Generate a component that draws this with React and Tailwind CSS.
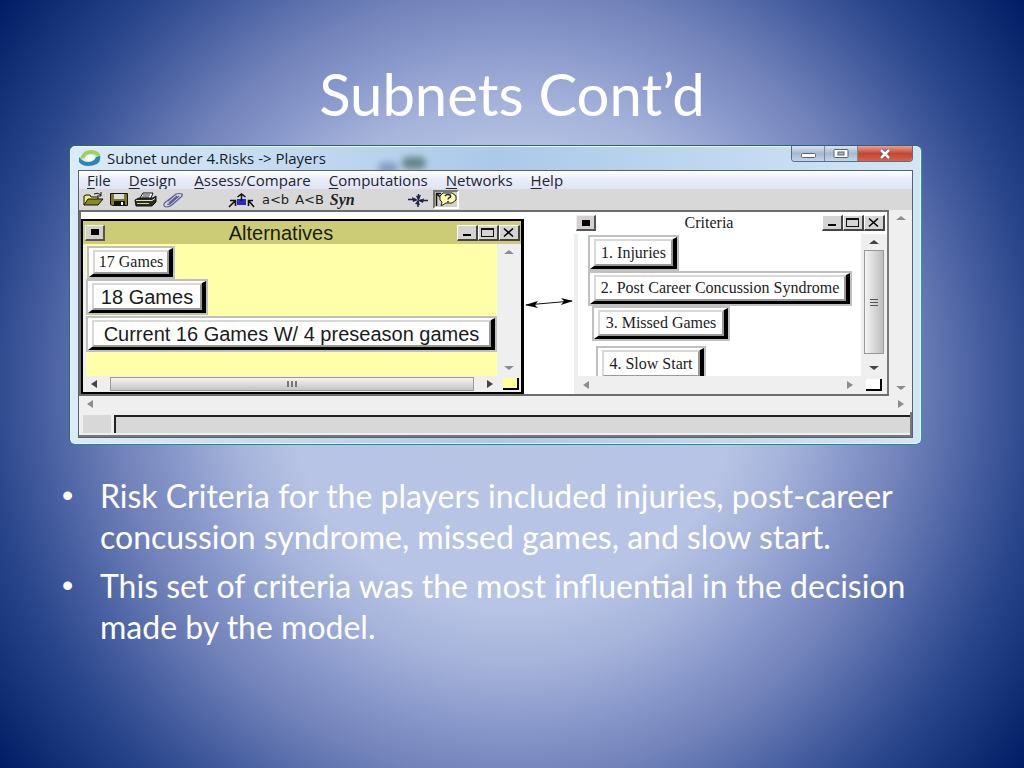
const MENUS = ["File", "Design", "Assess/Compare", "Computations", "Networks", "Help"];

const BULLETS = [
  "Risk Criteria for the players included injuries, post-career concussion syndrome, missed games, and slow start.",
  "This set of criteria was the most influential in the decision made by the model.",
];

const ARROWS = {
  up: "M0 5 L5 1 L10 5 Z",
  down: "M0 1 L10 1 L5 5 Z",
  left: "M6 0 L6 8 L0 4 Z",
  right: "M0 0 L0 8 L6 4 Z",
};

function ScrollArrow({ dir, dim }) {
  const vertical = dir === "up" || dir === "down";
  return (
    <button aria-label={`Scroll ${dir}`} className="flex size-4 shrink-0 items-center justify-center">
      <svg
        width={vertical ? 10 : 6}
        height={vertical ? 6 : 8}
        className={dim ? "text-[#8c8c8c]" : "text-[#444]"}
      >
        <path d={ARROWS[dir]} fill="currentColor" />
      </svg>
    </button>
  );
}

function SystemButton({ label }) {
  return (
    <button
      aria-label={`${label} menu`}
      className="flex h-4 w-5 items-center justify-center border-t border-l border-r-2 border-b-2 border-t-[#eee] border-l-[#eee] border-r-[#555] border-b-[#555] bg-[#d4d0d0]"
    >
      <span className="h-[6px] w-2 bg-black" />
    </button>
  );
}

function NodeWindowButtons() {
  const button =
    "flex h-4 w-[21px] items-center justify-center border-t border-l border-r-2 border-b-2 border-t-white border-l-white border-r-[#444] border-b-[#444] bg-[#d6d3d3]";
  return (
    <div className="flex">
      <button aria-label="Minimize" className={button}>
        <svg width="14" height="11"><path d="M3 8h8" stroke="#000" strokeWidth="2" /></svg>
      </button>
      <button aria-label="Maximize" className={button}>
        <svg width="16" height="11">
          <rect x="1.5" y="1.5" width="12" height="8" fill="none" stroke="#111" />
          <path d="M1 2h13" stroke="#111" strokeWidth="2" />
        </svg>
      </button>
      <button aria-label="Close" className={button}>
        <svg width="14" height="11"><path d="M2 1.500l9 8M11 1.500l-9 8" stroke="#000" strokeWidth="1.600" /></svg>
      </button>
    </div>
  );
}

// Raised node button: grey mat, white face, heavy mitred shadow on the right and bottom
function NodeButton({ children, className }) {
  return (
    <button className={`block bg-[#c0c0c0] p-[2px] ${className}`}>
      <span className="block h-full border-t-2 border-r-4 border-b-3 border-l-4 border-t-white border-r-black border-b-black border-l-white">
        <span className="flex h-full items-center justify-center border-2 border-t-[#d8d8d8] border-r-[#999] border-b-[#999] border-l-[#d8d8d8] bg-white whitespace-nowrap">
          {children}
        </span>
      </span>
    </button>
  );
}

function TitleBar() {
  return (
    <div className="relative flex h-6 shrink-0 items-start justify-between overflow-hidden pl-[9px]">
      <div className="absolute top-4 left-[308px] h-3 w-5 rounded-full bg-[#506e98]/50 blur-[3px]" />
      <div className="absolute top-[11px] left-[332px] h-3 w-6 rounded-full bg-[#456560]/70 blur-[3px]" />
      <div className="relative flex h-6 items-center gap-[6px]">
        <svg width="22" height="18" viewBox="0 0 22 18">
          <path d="M2 7Q5 1 12 1q6 0 9 4 1 3 0 5-4-5-9-5-5 0-6 4L1 10Z" fill="#a5d05a" />
          <path d="M0 8q4 5 9 5 6 0 8-5l4-1q1 5-3 8-4 2-9 2-6 0-9-4Z" fill="#2b86b6" />
          <ellipse cx="11" cy="9" rx="5" ry="3" fill="#f4fbfd" />
        </svg>
        <h2 className="font-['Open_Sans',sans-serif] text-[15px] leading-5 whitespace-nowrap text-[#171d2b]">
          Subnet under 4.Risks -&gt; Players
        </h2>
      </div>
      <div className="relative mr-[8px] flex h-4 overflow-hidden rounded-b border border-t-0 border-[#5b6d86]">
        <button aria-label="Minimize window" className="flex w-[33px] items-center justify-center border-r border-[#7788a0] bg-linear-to-b from-[#d8e4f0] via-[#a7b9cf] to-[#c2d4e7]">
          <svg width="17" height="12"><rect x="1.500" y="5.500" width="14" height="4" rx="1" fill="#fff" stroke="#596171" /></svg>
        </button>
        <button aria-label="Maximize window" className="flex w-[33px] items-center justify-center border-r border-[#7788a0] bg-linear-to-b from-[#d8e4f0] via-[#a7b9cf] to-[#c2d4e7]">
          <svg width="16" height="12">
            <rect x="1" y="1.500" width="14" height="8" rx="1" fill="#fff" stroke="#596171" />
            <rect x="5" y="4" width="6" height="3" fill="#aab8ca" stroke="#596171" />
          </svg>
        </button>
        <button aria-label="Close window" className="flex w-[54px] items-center justify-center bg-linear-to-b from-[#e3a193] via-[#c34532] to-[#d9634a]">
          <svg width="14" height="12">
            <path d="M3 2l8 8M11 2l-8 8" stroke="#6a4a50" strokeWidth="4" />
            <path d="M3 2l8 8M11 2l-8 8" stroke="#fff" strokeWidth="2.500" />
          </svg>
        </button>
      </div>
    </div>
  );
}

function Toolbar() {
  return (
    <div className="flex h-[21px] items-center bg-[#d8d8d8] pl-1">
      <div className="flex items-center gap-[5px]">
        <button aria-label="Open">
          <svg width="21" height="15" viewBox="0 0 21 15">
            <path d="M1 13V4l2-1h4l1 2h7v3" fill="#eeee70" stroke="#111" />
            <path d="M1 13l4-6h15l-5 6Z" fill="#8a8a20" stroke="#111" />
            <path d="M11 2q4-2 7 1M18 0v4h-4" fill="none" stroke="#111" />
          </svg>
        </button>
        <button aria-label="Save">
          <svg width="20" height="15" viewBox="0 0 20 15">
            <path d="M1.500 1.500h17v12h-15l-2-1Z" fill="#7b7b22" stroke="#111" />
            <path d="M5 2h10v5H5Z" fill="#ddd" />
            <path d="M5 9h11v5H5Z" fill="#111" />
            <path d="M12 10h2v3h-2Z" fill="#fff" />
          </svg>
        </button>
        <button aria-label="Print">
          <svg width="23" height="15" viewBox="0 0 23 15">
            <path d="M6 6l3-5h10l-2 5" fill="#fff" stroke="#111" />
            <path d="M9 3h7M8 5h7" stroke="#333" />
            <path d="M1 8l4-2h14l3-2v6l-4 4H2Z" fill="#2c2c22" stroke="#111" />
            <path d="M2 8.500h16l3-2" stroke="#ddd" fill="none" />
            <path d="M3 11.500h12" stroke="#d5d590" />
          </svg>
        </button>
        <button aria-label="Attach">
          <svg width="22" height="16" viewBox="0 0 22 16" fill="none" stroke="#5c5c9e" strokeWidth="1.200">
            <path d="M6 9l8-7q3-1 6 0 1 1-1 3l-8 7q-3 3-7 3-3-1-2-3 1-2 3-3l8-6M7 11l8-7M17 4l-8 7q-2 2-4 1" />
          </svg>
        </button>
      </div>
      <div className="ml-11 flex items-center gap-[6px] font-['DejaVu_Sans',sans-serif] text-[13px] leading-4 text-[#222]">
        <button aria-label="Compare nodes">
          <svg width="28" height="16" viewBox="0 0 28 16">
            <path d="M9 7h9v6H9Z" fill="#2929c8" />
            <path d="M13.500 9V2M9.500 5l4-3 4 3" fill="none" stroke="#111" strokeWidth="1.500" />
            <path d="M1 15l6-6M2 8.500h5.500V14M26 15l-5-6M25 8.500h-4.500V14" fill="none" stroke="#111" strokeWidth="1.600" />
          </svg>
        </button>
        <button>a&lt;b</button>
        <button>A&lt;B</button>
        <button className="font-['Liberation_Serif',serif] text-[16px] leading-4 font-bold italic">Syn</button>
      </div>
      <div className="ml-[52px] flex items-center gap-1">
        <button aria-label="Show connections">
          <svg width="22" height="16" viewBox="0 0 22 16">
            <path d="M1 7.500h8M12 8.500h9M11.500 2v5M11 9v6" fill="none" stroke="#20204a" strokeWidth="1.500" />
            <path d="M5 5l6 3-5 2ZM17 6.500l-6 2 5 2.500ZM9 4l5-1-2.500 6ZM8 12l5 1-2-5Z" fill="#20204a" />
          </svg>
        </button>
        <button aria-label="Context help" className="h-[19px] border-t-2 border-l-2 border-r-2 border-b-2 border-t-[#777] border-r-white border-b-white border-l-[#777] bg-[#d0d0c8]">
          <svg width="22" height="15" viewBox="0 0 22 15">
            <path d="M1.500 14V1.500H6M2 2l3 3" fill="none" stroke="#111" strokeWidth="1.500" />
            <path d="M5 4l3-3h9l4 3v4l-4 3h-6l-5 3 1-4-2-2Z" fill="#ffffa6" stroke="#222" />
            <path d="M10 4q1-1.500 3-1.500 3 0 2.500 2.500-2.500 1-2.500 2.500M13 9v1.500" fill="none" stroke="#26265e" strokeWidth="1.600" />
          </svg>
        </button>
      </div>
    </div>
  );
}

function AlternativesPanel() {
  return (
    <section className="mt-[7px] flex w-[443px] shrink-0 flex-col border-2 border-r-[3px] border-black bg-[#efefef]">
      <header className="flex h-[23px] items-center bg-[#cccc77] pr-px pl-[2px]">
        <SystemButton label="Alternatives" />
        <h3 className="flex-1 text-center font-['Liberation_Sans',sans-serif] text-[20px] leading-5 text-[#1b1b10]">Alternatives</h3>
        <NodeWindowButtons />
      </header>
      <div className="flex min-h-0 flex-1">
        <div className="ml-[3px] flex flex-1 flex-col items-start overflow-hidden bg-[#ffffaa] pt-[2px] font-['Liberation_Sans',sans-serif] text-[20px] leading-5 text-[#1c1c1c]">
          <NodeButton className="ml-px h-[33px] w-[88px] font-['Liberation_Serif',serif] text-[16px]">17 Games</NodeButton>
          <NodeButton className="h-[36px] w-[122px]">18 Games</NodeButton>
          <NodeButton className="mt-px h-[36px] w-full">Current 16 Games W/ 4 preseason games</NodeButton>
        </div>
        <div className="flex w-[24px] flex-col items-center justify-between">
          <ScrollArrow dir="up" dim />
          <ScrollArrow dir="down" dim />
        </div>
      </div>
      <div className="flex h-4 items-center pl-[3px]">
        <ScrollArrow dir="left" />
        <div className="ml-[8px] flex h-[14px] flex-1 items-center justify-center gap-[2px] border border-[#999] bg-linear-to-b from-[#f4f4f4] to-[#c5c5c7]">
          <i className="h-[6px] w-[2px] bg-[#777]" />
          <i className="h-[6px] w-[2px] bg-[#777]" />
          <i className="h-[6px] w-[2px] bg-[#777]" />
        </div>
        <div className="mr-[5px] ml-[8px]"><ScrollArrow dir="right" /></div>
        <div className="mr-[2px] h-3 w-4 border-r-2 border-b-2 border-black bg-[#ffff99]" />
      </div>
    </section>
  );
}

function CriteriaPanel() {
  return (
    <section className="flex w-[315px] shrink-0 flex-col border-r-2 border-[#777] bg-[#efefef] font-['Liberation_Serif',serif] text-[16px] leading-5 text-[#1c1c1c]">
      <header className="flex h-[22px] items-center bg-white pr-[2px] pl-[2px]">
        <SystemButton label="Criteria" />
        <h3 className="flex-1 text-center">Criteria</h3>
        <NodeWindowButtons />
      </header>
      <div className="flex min-h-0 flex-1">
        <div className="ml-1 flex flex-1 flex-col items-start overflow-hidden bg-white pt-px pl-[10px]">
          <NodeButton className="h-[36px] w-[91px] shrink-0">1. Injuries</NodeButton>
          <NodeButton className="h-[35px] w-[264px] shrink-0">2. Post Career Concussion Syndrome</NodeButton>
          <NodeButton className="ml-1 h-[35px] w-[138px] shrink-0">3. Missed Games</NodeButton>
          <NodeButton className="mt-[5px] ml-2 h-[36px] w-[110px] shrink-0">4. Slow Start</NodeButton>
        </div>
        <div className="flex w-[26px] flex-col items-center">
          <ScrollArrow dir="up" />
          <div className="flex w-5 flex-1 flex-col items-center justify-center gap-[2px] border border-[#999] bg-linear-to-r from-[#f4f4f4] to-[#bdbdc0]">
            <i className="h-px w-2 bg-[#555]" />
            <i className="h-px w-2 bg-[#555]" />
            <i className="h-px w-2 bg-[#555]" />
          </div>
          <div className="mt-[6px]"><ScrollArrow dir="down" /></div>
        </div>
      </div>
      <div className="flex h-[18px] items-center justify-between pl-1">
        <ScrollArrow dir="left" dim />
        <div className="flex items-center gap-1">
          <ScrollArrow dir="right" dim />
          <div className="mr-[5px] ml-1 h-3 w-4 border-r-2 border-b-2 border-black bg-white" />
        </div>
      </div>
    </section>
  );
}

function SubnetWindow() {
  return (
    <div className="mr-[102px] ml-[69px] flex h-[300px] flex-col rounded-md border border-[#315f83] border-r-[#1c9eb5] border-b-[#1c8aa5] bg-linear-to-r from-[#dcebf8] via-[#acc9e8] to-[#d2e6f6] shadow-[inset_0_0_0_1px_#e8f8ff]">
      <TitleBar />
      <div className="mr-[8px] mb-[6px] ml-[8px] flex min-h-0 flex-1 flex-col border border-[#56616e] bg-[#efefef]">
        <nav className="flex h-[18px] items-center gap-[18px] bg-linear-to-b from-white via-[#e9ecf9] to-[#dfe3f4] pl-[8px] font-['Open_Sans',sans-serif] text-[15px] leading-4 text-[#222431]">
          {MENUS.map((menu) => (
            <button key={menu} className="whitespace-nowrap">
              <span className="underline underline-offset-2">{menu[0]}</span>
              {menu.slice(1)}
            </button>
          ))}
        </nav>
        <Toolbar />
        <div className="flex h-[186px]">
          <div className="flex min-w-0 flex-1 border-2 border-r-0 border-[#6d6d6d] bg-white">
            <AlternativesPanel />
            <div className="flex flex-1 items-center">
              <svg viewBox="0 0 48 12" className="h-3 w-full">
                <path d="M1 8L47 4" stroke="#111" />
                <path d="M0 8l13-4-3 4 3 3ZM48 4L36 1l3 3-3 4Z" fill="#000" />
              </svg>
            </div>
            <CriteriaPanel />
          </div>
          <div className="flex w-[23px] flex-col items-center justify-between">
            <ScrollArrow dir="up" dim />
            <ScrollArrow dir="down" dim />
          </div>
        </div>
        <div className="flex h-4 items-center justify-between px-[3px]">
          <ScrollArrow dir="left" dim />
          <ScrollArrow dir="right" dim />
        </div>
        <div className="flex flex-1 gap-[3px] border-r-2 border-b-2 border-[#777] pt-[3px] pb-[2px] pl-1">
          <div className="w-7 bg-[#d8d8d8]" />
          <div className="flex-1 border-t-2 border-l-2 border-[#222] bg-[#d8d8d8]" />
        </div>
      </div>
    </div>
  );
}

export default function App() {
  return (
    <main className="min-h-screen overflow-hidden bg-[radial-gradient(circle_at_center,#b8c5e5_0%,#b7c4e5_35%,#a5b2da_44%,#8494c8_55%,#7585bc_61%,#5f73af_67%,#455d9f_74%,#274389_83%,#001c64_100%)] font-['Lato',sans-serif] text-white">
      <h1 className="pt-[58px] text-center text-[58px] leading-[72px]">Subnets Cont’d</h1>
      <div className="pt-[15px]">
        <SubnetWindow />
      </div>
      <ul className="mt-[30px] mr-[100px] ml-[62px] flex flex-col gap-[8px] text-[32px] leading-[41px]">
        {BULLETS.map((text) => (
          <li key={text} className="flex">
            <span className="w-[38px] shrink-0 font-['Liberation_Sans',sans-serif]">•</span>
            <p>{text}</p>
          </li>
        ))}
      </ul>
    </main>
  );
}
